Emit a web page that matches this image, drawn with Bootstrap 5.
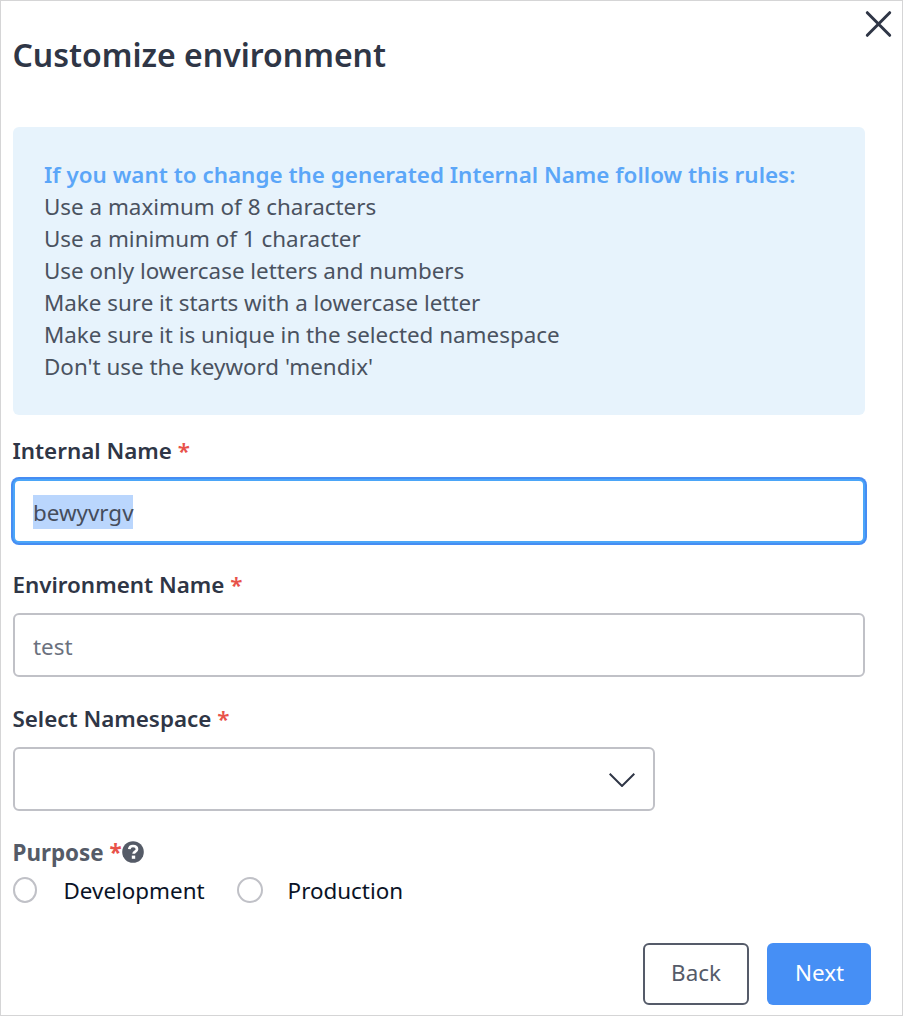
<!DOCTYPE html>
<html lang="en">
<head>
<meta charset="utf-8">
<meta name="viewport" content="width=device-width, initial-scale=1">
<title>Customize environment</title>
<link href="https://cdn.jsdelivr.net/npm/bootstrap@5.3.0/dist/css/bootstrap.min.css" rel="stylesheet">
<style>
body{font-family:"Noto Sans",sans-serif;font-size:22.4px;line-height:32px;color:#4a5260;background:#fff}
.dialog{height:1016px;border:1px solid #d5d5d6;padding:0 31px 0 12px}
.dialog-title{font-size:32px;line-height:44px;font-weight:600;color:#2f3646;padding-top:32px;margin:0 0 50px -.6px}
.dialog-close{top:9px;right:10px;width:28px;height:28px;line-height:0}
.rules{width:852px;height:288px;padding:32px 31px;background:#e7f3fc;border-radius:6px;margin-bottom:20px}
.rules-title{color:#5ba6f8;font-weight:600;letter-spacing:.015px}
.field-label{display:block;font-weight:600;color:#2f3646;margin:0 0 12px -.6px}
.req{color:#e8524a}
.field{width:852px;height:64px;border:2px solid #c0c1c7;border-radius:6px;padding:15px 18px 13px;font-size:22.4px;line-height:32px;color:#6b717e;margin-bottom:26px;background:#fff}
.field-focus{border-color:#4ba6f8;box-shadow:0 0 0 2px #468df3;color:#454d5c}
.picked{display:inline-block;height:34px;line-height:36px;background:#bad6fd;vertical-align:top;margin-top:-1px;width:100px;white-space:nowrap}
.field-select{width:642px}
.purpose{height:32px;margin-top:26px;color:#555b67;font-weight:700}
.purpose-text{margin-left:-.5px}
.help-icon{margin:0 0 2px .6px}
.option{height:32px;margin-top:6px;color:#0a1326}
.option label{margin-left:-.5px}
.option .form-check-input{width:26px;height:26px;border:2px solid #c0c1c7;margin:-2px 25px 0 0;float:none}
.option label:first-child .form-check-input{width:24.500px;margin-right:26.500px}
.actions{gap:18px;margin-top:36px}
.action{height:62px;border-radius:6px;font-size:22.4px;line-height:32px;padding:0 0 3px}
.action-back{width:106px;border:2px solid #555b69;color:#555b69}
.action-next{width:104px;background:#468ff5;color:#fff;border:0;padding-left:1px}
</style>
</head>
<body>
<main class="dialog position-relative">
  <button type="button" class="dialog-close btn p-0 border-0 position-absolute" aria-label="Close">
    <svg width="28" height="28" viewBox="0 0 28 28" fill="none" stroke="#2f3646" stroke-width="3" stroke-linecap="round"><path d="M3.300 2.700 25.700 25.300M25.700 2.700 3.300 25.300"/></svg>
  </button>
  <h1 class="dialog-title">Customize environment</h1>
  <section class="rules">
    <div class="rules-title">If you want to change the generated Internal Name follow this rules:</div>
    <div>Use a maximum of 8 characters</div>
    <div>Use a minimum of 1 character</div>
    <div>Use only lowercase letters and numbers</div>
    <div>Make sure it starts with a lowercase letter</div>
    <div>Make sure it is unique in the selected namespace</div>
    <div>Don't use the keyword 'mendix'</div>
  </section>
  <form>
    <label class="field-label" id="l1">Internal Name <span class="req">*</span></label>
    <div class="form-control field field-focus" role="textbox" aria-labelledby="l1"><span class="picked">bewyvrgv</span></div>
    <label class="field-label" for="env">Environment Name <span class="req">*</span></label>
    <input class="form-control field" id="env" type="text" value="test">
    <label class="field-label" id="l3">Select Namespace <span class="req">*</span></label>
    <div class="field field-select d-flex justify-content-end align-items-center" role="combobox" aria-labelledby="l3">
      <svg width="26" height="14" viewBox="0 0 26 14" fill="none" stroke="#2f3646" stroke-width="2"><path d="M.7.7 13 13 25.3.7"/></svg>
    </div>
    <div class="purpose d-flex align-items-center">
      <span class="purpose-text">Purpose <span class="req">*</span></span>
      <svg class="help-icon" width="22" height="22" viewBox="0 0 22 22"><circle cx="11" cy="11" r="10.8" fill="#555b67"/><path d="M7.300 8.200C7.500 5.800 9 5 11 5c2.300 0 4 1.200 4 3.200 0 2.400-3.400 2.300-3.400 4.600" fill="none" stroke="#fff" stroke-width="2.700"/><path d="M9.800 14.600h3.400v3.200H9.800z" fill="#fff"/></svg>
    </div>
    <div class="d-flex align-items-center option">
      <label class="d-flex align-items-center me-4"><input class="form-check-input" type="radio" name="purpose">Development</label>
      <label class="d-flex align-items-center ms-2"><input class="form-check-input" type="radio" name="purpose">Production</label>
    </div>
    <div class="d-flex justify-content-end actions">
      <button type="button" class="btn action action-back">Back</button>
      <button type="button" class="btn action action-next">Next</button>
    </div>
  </form>
</main>
<script src="https://cdn.jsdelivr.net/npm/bootstrap@5.3.0/dist/js/bootstrap.bundle.min.js"></script>
</body>
</html>
